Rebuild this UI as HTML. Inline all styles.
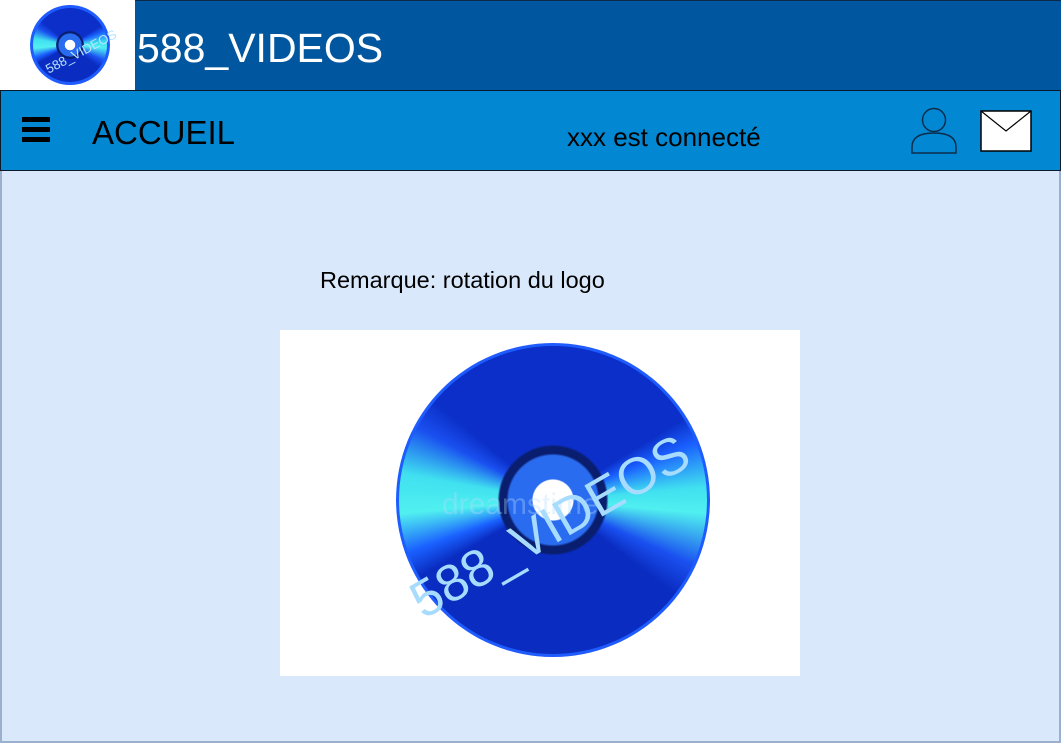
<!DOCTYPE html>
<html><head><meta charset="utf-8"><style>
*{margin:0;padding:0;box-sizing:border-box}
body{width:1061px;height:749px;background:#fff;font-family:"Liberation Sans",sans-serif;position:relative;overflow:hidden}
.top{position:absolute;left:135px;top:0;width:926px;height:91px;background:#01579f;border-top:1px solid #0a2a4a}
.title{position:absolute;left:137px;top:25px;color:#fff;font-size:41px}
.nav{position:absolute;left:0;top:90px;width:1061px;height:81px;background:#0288d2;border:1px solid #0b1a2a}
.main{position:absolute;left:0;top:171px;width:1061px;height:572px;background:#dae8fb;border-left:2px solid #9bb0cc;border-right:2px solid #9bb0cc;border-bottom:2px solid #9bb0cc}
.disc{position:absolute;border-radius:50%;overflow:hidden;
background:
radial-gradient(circle, #fff 0 9%, #2a6cf0 9.5% 20%, #0a1e70 21% 24%, transparent 25%),
conic-gradient(from 0deg, #0b2fc8 0deg 58deg, #1a60ff 68deg, #40e0f0 85deg, #50f0f0 95deg, #1a50f0 115deg, #0a2cc0 128deg 240deg, #1a60ff 250deg, #50f0f0 265deg, #40e0f0 280deg, #1a50f0 298deg, #0b2fc8 310deg 360deg);
box-shadow:inset 0 0 0 3px #1e5cff}
.lbl{position:absolute;color:#b8e4ff;white-space:nowrap}
</style></head><body>
<div class="top"></div>
<div class="disc" style="left:30px;top:5px;width:80px;height:80px"></div>
<div class="lbl" style="left:42px;top:44px;font-size:13px;transform:rotate(-28deg)">588_VIDEOS</div>
<div class="title">588_VIDEOS</div>
<div class="nav">
 <div style="position:absolute;left:21px;top:26px;width:28px;height:5px;background:#000;box-shadow:0 10px 0 #000,0 20px 0 #000"></div>
 <div style="position:absolute;left:91px;top:23px;font-size:33px;color:#000">ACCUEIL</div>
 <div style="position:absolute;left:566px;top:31px;font-size:26px;color:#000">xxx est connecté</div>
 <svg style="position:absolute;left:908px;top:16px" width="50" height="48" viewBox="0 0 50 48"><circle cx="25" cy="13" r="11.5" fill="none" stroke="#0d2d4d" stroke-width="1.5"/><path d="M3 46 L3 40 Q3 26 25 26 Q47 26 47 40 L47 46 Z" fill="none" stroke="#0d2d4d" stroke-width="1.5"/></svg>
 <svg style="position:absolute;left:979px;top:19px" width="53" height="42" viewBox="0 0 53 42"><rect x="1" y="1" width="50" height="40" fill="#fff" stroke="#000" stroke-width="1.5"/><path d="M1 1 L26 21 L51 1" fill="none" stroke="#000" stroke-width="1.2"/></svg>
</div>
<div class="main">
 <div style="position:absolute;left:318px;top:96px;font-size:23.5px;color:#000">Remarque: rotation du logo</div>
 <div style="position:absolute;left:278px;top:159px;width:520px;height:346px;background:#fff"></div>
 <div class="disc" style="left:394px;top:172px;width:314px;height:314px"></div>
 <div style="position:absolute;left:440px;top:317px;font-size:30px;color:rgba(180,220,255,0.35)">dreamstime.</div>
 <div class="lbl" style="left:392px;top:326px;font-size:52px;color:#a8dcff;transform:rotate(-30deg);transform-origin:center">588_VIDEOS</div>
</div>
</body></html>
